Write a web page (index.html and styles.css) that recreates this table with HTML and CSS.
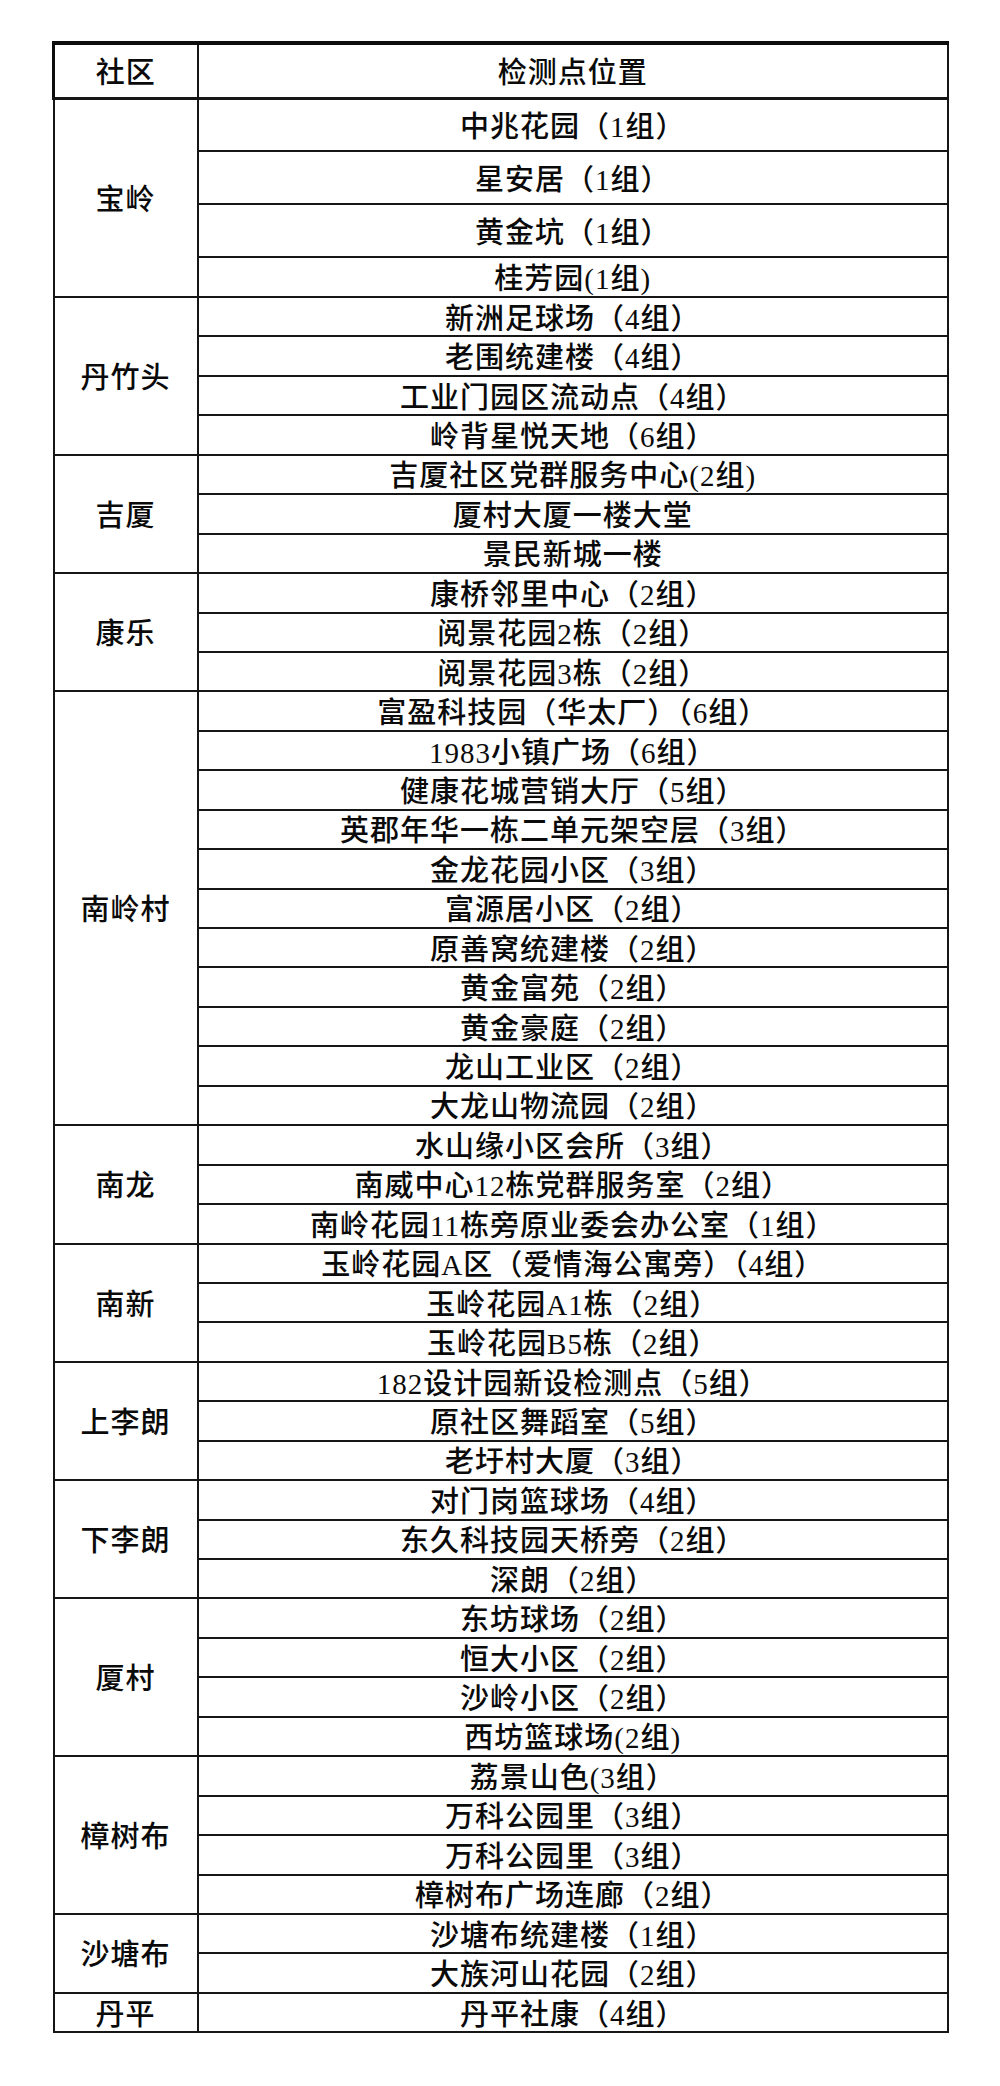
FILE: index.html
```html
<!DOCTYPE html>
<html lang="zh-CN">
<head>
<meta charset="utf-8">
<title>检测点位置</title>
<link rel="stylesheet" href="styles.css">
</head>
<body>
<div class="page">
<table class="sites">
  <colgroup><col class="col-area"><col class="col-site"></colgroup>
  <thead>
    <tr class="r-head"><th class="area head-area">社区</th><th class="site">检测点位置</th></tr>
  </thead>
  <tbody>
    <tr class="r-tall"><td class="area" rowspan="4">宝岭</td><td class="site">中兆花园（1组）</td></tr>
    <tr class="r-tall"><td class="site">星安居（1组）</td></tr>
    <tr class="r-tall"><td class="site">黄金坑（1组）</td></tr>
    <tr class="r-short"><td class="site">桂芳园(1组)</td></tr>

    <tr><td class="area" rowspan="4">丹竹头</td><td class="site">新洲足球场（4组）</td></tr>
    <tr><td class="site">老围统建楼（4组）</td></tr>
    <tr><td class="site">工业门园区流动点（4组）</td></tr>
    <tr><td class="site">岭背星悦天地（6组）</td></tr>

    <tr><td class="area" rowspan="3">吉厦</td><td class="site">吉厦社区党群服务中心(2组)</td></tr>
    <tr><td class="site">厦村大厦一楼大堂</td></tr>
    <tr><td class="site">景民新城一楼</td></tr>

    <tr><td class="area" rowspan="3">康乐</td><td class="site">康桥邻里中心（2组）</td></tr>
    <tr><td class="site">阅景花园2栋（2组）</td></tr>
    <tr><td class="site">阅景花园3栋（2组）</td></tr>

    <tr><td class="area" rowspan="11">南岭村</td><td class="site">富盈科技园（华太厂）（6组）</td></tr>
    <tr><td class="site">1983小镇广场（6组）</td></tr>
    <tr><td class="site">健康花城营销大厅（5组）</td></tr>
    <tr><td class="site">英郡年华一栋二单元架空层（3组）</td></tr>
    <tr><td class="site">金龙花园小区（3组）</td></tr>
    <tr><td class="site">富源居小区（2组）</td></tr>
    <tr><td class="site">原善窝统建楼（2组）</td></tr>
    <tr><td class="site">黄金富苑（2组）</td></tr>
    <tr><td class="site">黄金豪庭（2组）</td></tr>
    <tr><td class="site">龙山工业区（2组）</td></tr>
    <tr><td class="site">大龙山物流园（2组）</td></tr>

    <tr><td class="area" rowspan="3">南龙</td><td class="site">水山缘小区会所（3组）</td></tr>
    <tr><td class="site">南威中心12栋党群服务室（2组）</td></tr>
    <tr><td class="site">南岭花园11栋旁原业委会办公室（1组）</td></tr>

    <tr><td class="area" rowspan="3">南新</td><td class="site">玉岭花园A区（爱情海公寓旁）（4组）</td></tr>
    <tr><td class="site">玉岭花园A1栋（2组）</td></tr>
    <tr><td class="site">玉岭花园B5栋（2组）</td></tr>

    <tr><td class="area" rowspan="3">上李朗</td><td class="site">182设计园新设检测点（5组）</td></tr>
    <tr><td class="site">原社区舞蹈室（5组）</td></tr>
    <tr><td class="site">老圩村大厦（3组）</td></tr>

    <tr><td class="area" rowspan="3">下李朗</td><td class="site">对门岗篮球场（4组）</td></tr>
    <tr><td class="site">东久科技园天桥旁（2组）</td></tr>
    <tr><td class="site">深朗（2组）</td></tr>

    <tr><td class="area" rowspan="4">厦村</td><td class="site">东坊球场（2组）</td></tr>
    <tr><td class="site">恒大小区（2组）</td></tr>
    <tr><td class="site">沙岭小区（2组）</td></tr>
    <tr><td class="site">西坊篮球场(2组)</td></tr>

    <tr><td class="area" rowspan="4">樟树布</td><td class="site">荔景山色(3组）</td></tr>
    <tr><td class="site">万科公园里（3组）</td></tr>
    <tr><td class="site">万科公园里（3组）</td></tr>
    <tr><td class="site">樟树布广场连廊（2组）</td></tr>

    <tr><td class="area" rowspan="2">沙塘布</td><td class="site">沙塘布统建楼（1组）</td></tr>
    <tr><td class="site">大族河山花园（2组）</td></tr>

    <tr><td class="area">丹平</td><td class="site">丹平社康（4组）</td></tr>
  </tbody>
</table>
</div>
</body>
</html>
```

FILE: styles.css
```css
html, body {
  margin: 0;
  padding: 0;
  background: #ffffff;
}

.page {
  padding: 41px 0 0 52px;
}

.sites {
  border-collapse: collapse;
  table-layout: fixed;
  width: 897px;
  color: #0a0a0a;
  font-family: "Liberation Serif", "Noto Sans CJK SC", serif;
  font-size: 29px;
  font-weight: 500;
  letter-spacing: 1px;
  line-height: 30px;
}

.col-area { width: 144px; }

.sites th,
.sites td {
  border: 2px solid #161616;
  padding: 4px 0 0 0;
  text-align: center;
  vertical-align: middle;
  font-weight: 500;
  white-space: nowrap;
}

.sites thead th {
  border-top: 4px solid #0d0d0d;
  border-bottom: 3px solid #161616;
}

.sites thead .head-area {
  border-left: 3px solid #0d0d0d;
}

.sites tr { height: 39.45px; }
.sites .r-head { height: 55px; }
.sites .r-tall { height: 53px; }
.sites .r-short { height: 40px; }
```
